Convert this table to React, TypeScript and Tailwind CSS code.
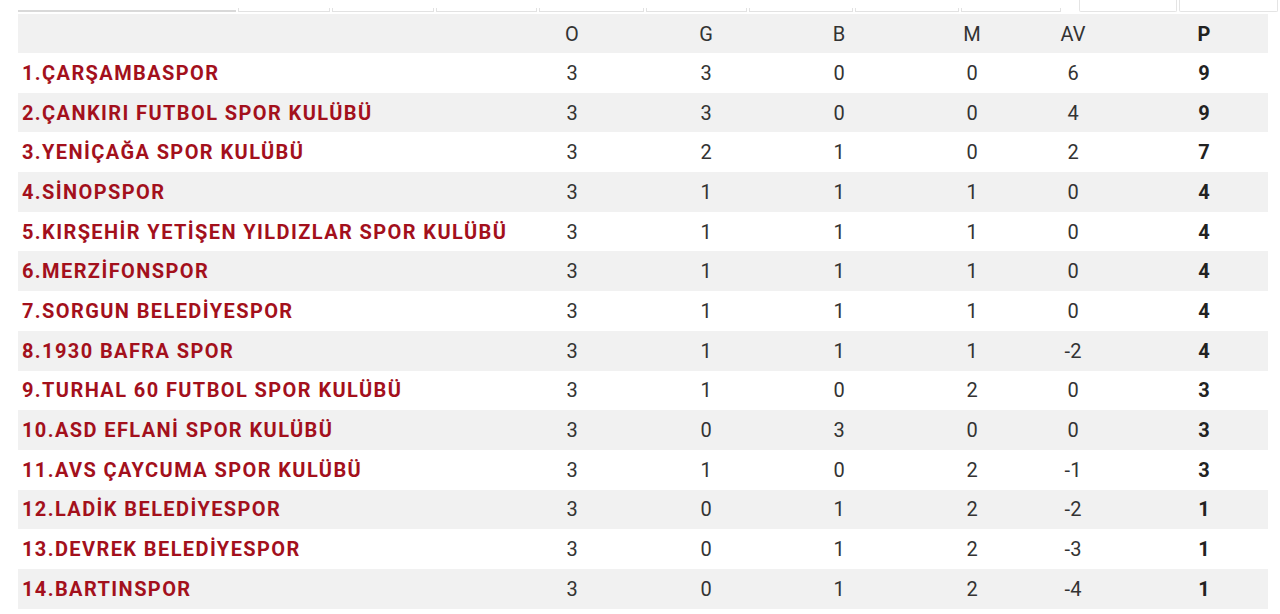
const teams = [
  { name: "1.ÇARŞAMBASPOR", o: 3, g: 3, b: 0, m: 0, av: 6, p: 9 },
  { name: "2.ÇANKIRI FUTBOL SPOR KULÜBÜ", o: 3, g: 3, b: 0, m: 0, av: 4, p: 9 },
  { name: "3.YENİÇAĞA SPOR KULÜBÜ", o: 3, g: 2, b: 1, m: 0, av: 2, p: 7 },
  { name: "4.SİNOPSPOR", o: 3, g: 1, b: 1, m: 1, av: 0, p: 4 },
  { name: "5.KIRŞEHİR YETİŞEN YILDIZLAR SPOR KULÜBÜ", o: 3, g: 1, b: 1, m: 1, av: 0, p: 4 },
  { name: "6.MERZİFONSPOR", o: 3, g: 1, b: 1, m: 1, av: 0, p: 4 },
  { name: "7.SORGUN BELEDİYESPOR", o: 3, g: 1, b: 1, m: 1, av: 0, p: 4 },
  { name: "8.1930 BAFRA SPOR", o: 3, g: 1, b: 1, m: 1, av: -2, p: 4 },
  { name: "9.TURHAL 60 FUTBOL SPOR KULÜBÜ", o: 3, g: 1, b: 0, m: 2, av: 0, p: 3 },
  { name: "10.ASD EFLANİ SPOR KULÜBÜ", o: 3, g: 0, b: 3, m: 0, av: 0, p: 3 },
  { name: "11.AVS ÇAYCUMA SPOR KULÜBÜ", o: 3, g: 1, b: 0, m: 2, av: -1, p: 3 },
  { name: "12.LADİK BELEDİYESPOR", o: 3, g: 0, b: 1, m: 2, av: -2, p: 1 },
  { name: "13.DEVREK BELEDİYESPOR", o: 3, g: 0, b: 1, m: 2, av: -3, p: 1 },
  { name: "14.BARTINSPOR", o: 3, g: 0, b: 1, m: 2, av: -4, p: 1 },
];

// widths of the cut-off cells above the table
const topCells = [220, 92, 103, 102, 105, 102, 105, 105, 100, 15, 98, 100];

const cols = "grid grid-cols-[487px_134px_134px_132px_134px_68px_33px_128px]";

export default function App() {
  return (
    <div className="w-[1280px] h-[614px] overflow-hidden bg-white font-['Roboto',sans-serif]">
      {/* bottom edge of the filter row above */}
      <div className="flex h-[12px] pl-[18px]">
        {topCells.map((w, i) => (
          <div key={i} style={{ width: w }} className="h-full flex flex-col justify-end mr-[2px]">
            {i === 0 ? (
              <div className="h-[2px] bg-[#d9d9d9]" />
            ) : i === 9 ? null : (
              <div
                className={
                  i >= 10
                    ? "h-[12px] border-x border-b border-[#e4e4e4] rounded-b-[2px]"
                    : "h-[4px] border-x border-b border-[#e2e2e2]"
                }
              />
            )}
          </div>
        ))}
      </div>

      <div className="mt-[2px] ml-[18px] w-[1250px]">
        {/* header */}
        <div className={`${cols} h-[39px] items-center bg-[#f1f1f1] text-[20px] text-[#333]`}>
          <div />
          <div className="text-center">O</div>
          <div className="text-center">G</div>
          <div className="text-center">B</div>
          <div className="text-center">M</div>
          <div className="text-center">AV</div>
          <div />
          <div className="text-center font-bold text-[#222]">P</div>
        </div>

        {teams.map((t, i) => (
          <div
            key={t.name}
            className={`${cols} h-[39.7px] items-center text-[20px] ${i % 2 === 1 ? "bg-[#f1f1f1]" : "bg-white"}`}
          >
            <div className="pl-[4px] font-bold text-[#a3101c] whitespace-nowrap tracking-[1.4px]">{t.name}</div>
            <div className="text-center text-[#333]">{t.o}</div>
            <div className="text-center text-[#333]">{t.g}</div>
            <div className="text-center text-[#333]">{t.b}</div>
            <div className="text-center text-[#333]">{t.m}</div>
            <div className="text-center text-[#333]">{t.av}</div>
            <div />
            <div className="text-center font-bold text-[#222]">{t.p}</div>
          </div>
        ))}
      </div>
    </div>
  );
}
